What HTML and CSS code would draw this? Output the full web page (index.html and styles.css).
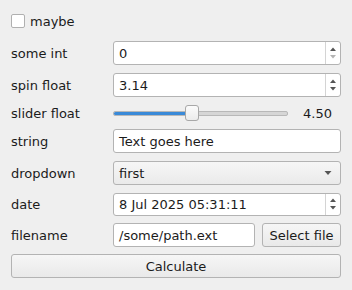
FILE: index.html
```html
<!DOCTYPE html>
<html lang="en">
<head>
    <meta charset="UTF-8">
    <title>Form</title>
    <link rel="stylesheet" href="styles.css">
</head>
<body>
    <div class="form">
        <div class="row check-row">
            <span class="checkbox"></span>
            <span>maybe</span>
        </div>

        <div class="row">
            <span class="label">some int</span>
            <div class="field spin">
                <span class="value">0</span>
                <span class="spin-buttons">
                    <svg width="8" height="18" viewBox="0 0 8 18">
                        <path d="M1,7 L4,3.5 L7,7 Z" fill="#555" />
                        <path d="M1,11 L4,14.5 L7,11 Z" fill="#b4b4b4" />
                    </svg>
                </span>
            </div>
        </div>

        <div class="row">
            <span class="label">spin float</span>
            <div class="field spin">
                <span class="value">3.14</span>
                <span class="spin-buttons">
                    <svg width="8" height="18" viewBox="0 0 8 18">
                        <path d="M1,7 L4,3.5 L7,7 Z" fill="#555" />
                        <path d="M1,11 L4,14.5 L7,11 Z" fill="#555" />
                    </svg>
                </span>
            </div>
        </div>

        <div class="row slider-row">
            <span class="label">slider float</span>
            <div class="slider">
                <div class="groove">
                    <div class="groove-fill" style="width: 45%"></div>
                    <div class="handle" style="left: 45%"></div>
                </div>
            </div>
            <span class="slider-value">4.50</span>
        </div>

        <div class="row">
            <span class="label">string</span>
            <div class="field">
                <span class="value">Text goes here</span>
            </div>
        </div>

        <div class="row">
            <span class="label">dropdown</span>
            <div class="combo">
                <span class="value">first</span>
                <svg width="8" height="6" viewBox="0 0 8 6">
                    <path d="M0.5,1 L7.5,1 L4,5 Z" fill="#555" />
                </svg>
            </div>
        </div>

        <div class="row date-row">
            <span class="label">date</span>
            <div class="field spin">
                <span class="value">8 Jul 2025 05:31:11</span>
                <span class="spin-buttons">
                    <svg width="8" height="18" viewBox="0 0 8 18">
                        <path d="M1,7 L4,3.5 L7,7 Z" fill="#555" />
                        <path d="M1,11 L4,14.5 L7,11 Z" fill="#555" />
                    </svg>
                </span>
            </div>
        </div>

        <div class="row">
            <span class="label">filename</span>
            <div class="file-group">
                <div class="field">
                    <span class="value">/some/path.ext</span>
                </div>
                <button class="btn select-btn">Select file</button>
            </div>
        </div>

        <button class="btn calc-btn">Calculate</button>
    </div>
</body>
</html>
```

FILE: styles.css
```css
html, body {
    margin: 0;
    background-color: #efefef;
}
body {
    font-family: "DejaVu Sans", sans-serif;
    font-size: 13px;
    color: #1b1b1b;
}
.form {
    display: flex;
    flex-direction: column;
    gap: 8px;
    padding: 9px 11px 0 11px;
}
.row {
    display: flex;
    align-items: center;
    height: 24px;
}
.label {
    width: 102px;
    flex-shrink: 0;
}
.check-row {
    gap: 5px;
}
.checkbox {
    width: 12px;
    height: 12px;
    background: #fff;
    border: 1px solid #b0b0b0;
    border-radius: 2px;
}
.field {
    flex: 1;
    display: flex;
    align-items: center;
    background: #fff;
    border: 1px solid #b3b3b3;
    border-radius: 3px;
    box-sizing: border-box;
    height: 24px;
    padding-left: 5px;
}
.field .value {
    flex: 1;
}
.spin-buttons {
    width: 14px;
    height: 100%;
    display: flex;
    align-items: center;
    justify-content: center;
    border-left: 1px solid #d4d4d4;
}
.slider-row {
    height: 16px;
}
.slider {
    flex: 1;
    display: flex;
    align-items: center;
}
.groove {
    position: relative;
    width: 100%;
    height: 3px;
    background: #d6d6d6;
    border: 1px solid #b8b8b8;
    border-radius: 2px;
}
.groove-fill {
    height: 100%;
    background: #3a8ad8;
    border-radius: 2px;
}
.handle {
    position: absolute;
    top: -7px;
    width: 14px;
    height: 16px;
    margin-left: -7px;
    background: linear-gradient(#fbfbfb, #ececec);
    border: 1px solid #a8a8a8;
    border-radius: 3px;
    box-sizing: border-box;
}
.slider-value {
    width: 53px;
    text-align: right;
    padding-right: 9px;
    box-sizing: border-box;
    flex-shrink: 0;
}
.combo {
    flex: 1;
    height: 24px;
    box-sizing: border-box;
    display: flex;
    align-items: center;
    padding: 0 8px 0 5px;
    background: linear-gradient(#f6f6f6, #eaeaea);
    border: 1px solid #b3b3b3;
    border-radius: 3px;
}
.combo .value {
    flex: 1;
}
.date-row {
    height: 22px;
}
.date-row .field {
    height: 23px;
}
.file-group {
    flex: 1;
    display: flex;
    gap: 7px;
}
.btn {
    font-family: "DejaVu Sans", sans-serif;
    font-size: 13px;
    color: #1b1b1b;
    height: 24px;
    background: linear-gradient(#f6f6f6, #e9e9e9);
    border: 1px solid #b3b3b3;
    border-radius: 3px;
    padding: 0;
}
.select-btn {
    width: 79px;
}
.calc-btn {
    width: 330px;
    margin-top: -1px;
}
```
